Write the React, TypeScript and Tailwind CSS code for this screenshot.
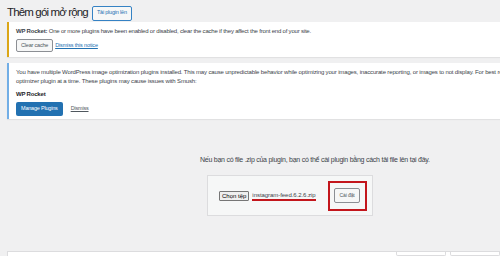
import React from 'react';

export default function App() {
    return (
        <div className="w-[500px] h-[256px] overflow-hidden bg-[#f0f0f1] pl-[7px] text-[#3c434a] font-['Liberation_Sans',Arial,sans-serif]">
            {/* page header */}
            <div className="flex items-center gap-[4px] pt-[5px] h-[21px]">
                <h1 className="text-[11.5px] leading-none text-[#1d2327] font-normal tracking-[-0.85px]">Thêm gói mở rộng</h1>
                <button className="h-[15px] px-[4px] border border-[#3582c4] rounded-[2px] bg-[#f6f7f7] text-[5.5px] tracking-[-0.2px] text-[#2271b1] leading-none">Tải plugin lên</button>
            </div>

            {/* WP Rocket notice */}
            <div className="mt-[1px] h-[35px] bg-white border-l-[2px] border-[#dba617] shadow-[0_1px_1px_rgba(0,0,0,0.06)] pl-[7px] pt-[5px]">
                <p className="text-[6px] leading-[9px] whitespace-nowrap tracking-[-0.2px] text-[#3c434a]">
                    <strong className="font-bold">WP Rocket:</strong> One or more plugins have been enabled or disabled, clear the cache if they affect the front end of your site.
                </p>
                <div className="flex items-center gap-[2px] mt-[3px]">
                    <button className="h-[13px] px-[4px] border border-[#8c8f94] rounded-[2px] bg-[#f6f7f7] text-[5.5px] tracking-[-0.2px] text-[#50575e] leading-none">Clear cache</button>
                    <a className="text-[5.5px] tracking-[-0.15px] text-[#2271b1] underline leading-none">Dismiss this notice</a>
                </div>
            </div>

            {/* Smush notice */}
            <div className="mt-[6px] h-[56px] bg-white border-l-[2px] border-[#72aee6] shadow-[0_1px_1px_rgba(0,0,0,0.06)] pl-[7px] pt-[5px]">
                <p className="text-[6px] leading-[8.5px] whitespace-nowrap tracking-[-0.15px] text-[#3c434a]">
                    You have multiple WordPress image optimization plugins installed. This may cause unpredictable behavior while optimizing your images, inaccurate reporting, or images to not display. For best results use only one image
                    <br />
                    optimizer plugin at a time. These plugins may cause issues with Smush:
                </p>
                <p className="text-[6px] leading-none font-bold tracking-[-0.2px] text-[#1d2327] mt-[6px]">WP Rocket</p>
                <div className="flex items-center gap-[8px] mt-[5px]">
                    <button className="h-[14px] px-[5px] rounded-[2px] bg-[#2271b1] text-[5.5px] tracking-[-0.2px] text-white leading-none">Manage Plugins</button>
                    <a className="text-[5.5px] tracking-[-0.2px] text-[#50575e] underline leading-none">Dismiss</a>
                </div>
            </div>

            {/* upload area */}
            <div className="h-[132px] pt-[37px]">
                <p className="pl-[193px] text-[7px] leading-none tracking-[-0.25px] text-[#3c434a] whitespace-nowrap">
                    Nếu bạn có file .zip của plugin, bạn có thể cài plugin bằng cách tải file lên tại đây.
                </p>
                <div className="mt-[12px] ml-[200px] w-[166px] h-[41px] bg-[#f6f7f7] border border-[#dcdcde] flex items-center pl-[11px]">
                    <div className="flex items-center whitespace-nowrap">
                        <button className="h-[10px] px-[2px] border border-[#767676] rounded-[1px] bg-[#efefef] text-[6px] tracking-[0px] text-black leading-none">Chọn tệp</button>
                        <span className="ml-[3px] text-[6px] tracking-[-0.05px] leading-none text-[#3c434a] border-b-[2px] border-[#c3161c] pb-[1px] mt-[2px]">instagram-feed.6.2.6.zip</span>
                    </div>
                    <div className="ml-[12px] w-[39px] h-[30px] border-[2px] border-[#c3161c] flex items-center justify-center">
                        <button className="h-[15px] px-[4px] border border-[#8c8f94] rounded-[2px] bg-[#f6f7f7] text-[5px] tracking-[-0.1px] text-[#50575e] leading-none">Cài đặt</button>
                    </div>
                </div>
            </div>

            {/* list table top */}
            <div className="h-[20px] bg-white border-t border-l border-[#dcdcde] flex justify-end">
                <div className="w-[50px] h-[4px] border border-t-0 border-[#dcdcde] rounded-b-[2px] mr-[4px]" />
                <div className="w-[50px] h-[4px] border border-t-0 border-[#dcdcde] rounded-b-[2px]" />
            </div>
        </div>
    );
}
